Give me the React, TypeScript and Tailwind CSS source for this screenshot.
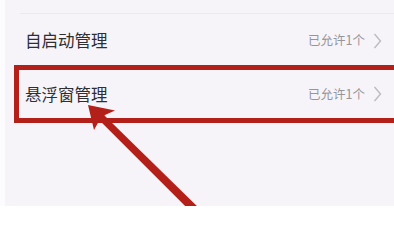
import React from 'react';

const font = { fontFamily: '"Noto Sans CJK SC", "Noto Sans", sans-serif' };

function Chevron() {
  return (
    <svg width="9" height="16" viewBox="0 0 9 16" className="ml-[8px]">
      <path d="M1.5 1 L7.5 8 L1.5 15" fill="none" stroke="#bdbbc1" strokeWidth="1.4" />
    </svg>
  );
}

function Row({ title, value }: { title: string; value: string }) {
  return (
    <div className="flex h-full items-center justify-between">
      <span className="text-[16.5px] leading-none text-[#2f2e31]">{title}</span>
      <div className="flex items-center">
        <span className="text-[12.5px] leading-none text-[#97959a]">{value}</span>
        <Chevron />
      </div>
    </div>
  );
}

export default function App() {
  return (
    <div className="relative flex h-[206px] w-[394px] overflow-hidden bg-[#f6f4f8]" style={font}>
      <div className="w-[5px] shrink-0 bg-[#fcfbfd]" />
      <div className="flex flex-1 flex-col">
        <div className="h-[13px] shrink-0" />
        <div className="ml-[15px] h-[52px] shrink-0 border-t border-[#ebe9ee] pl-[5px] pr-[12px] pt-[2px]">
          <Row title="自启动管理" value="已允许1个" />
        </div>
        {/* highlight box runs off the right edge, so no right border */}
        <div className="ml-[9px] h-[58px] shrink-0 border-y-[5px] border-l-[5px] border-[#b31f19] pl-[6px] pr-[12px]">
          <Row title="悬浮窗管理" value="已允许1个" />
        </div>
      </div>
      <svg className="pointer-events-none absolute left-0 top-0" width="394" height="206" viewBox="0 0 394 206">
        <polygon points="102.4,113.5 198.4,207.5 192.6,213.5 97.6,118.5" fill="#b31f19" />
        <polygon points="88,105 115,110.5 105,115 99,121 94,130" fill="#b31f19" />
      </svg>
    </div>
  );
}
